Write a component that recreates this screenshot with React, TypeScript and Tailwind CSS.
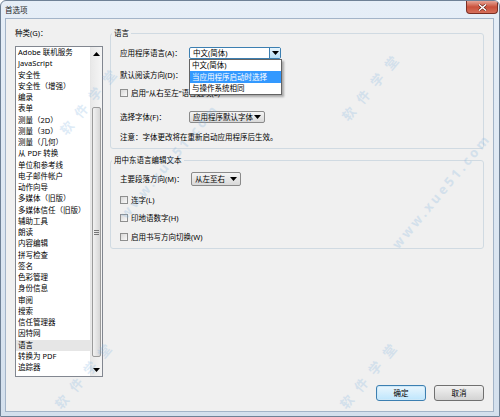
import type { ReactNode } from "react";

const categories = [
  "Adobe 联机服务",
  "JavaScript",
  "安全性",
  "安全性（增强）",
  "编录",
  "表单",
  "测量（2D）",
  "测量（3D）",
  "测量（几何）",
  "从 PDF 转换",
  "单位和参考线",
  "电子邮件帐户",
  "动作向导",
  "多媒体（旧版）",
  "多媒体信任（旧版）",
  "辅助工具",
  "朗读",
  "内容编辑",
  "拼写检查",
  "签名",
  "色彩管理",
  "身份信息",
  "审阅",
  "搜索",
  "信任管理器",
  "因特网",
  "语言",
  "转换为 PDF",
  "追踪器",
];

function Arrow({ up = false }: { up?: boolean }) {
  return (
    <svg width="7" height="4" viewBox="0 0 7 4" className={up ? "rotate-180" : ""}>
      <path d="M0 0h7L3.5 4z" fill="#000" />
    </svg>
  );
}

function Combo({ value, width }: { value: string; width: string }) {
  return (
    <div
      className={`${width} h-full flex items-center justify-between rounded-[2px] border border-[#8a8a8a] bg-gradient-to-b from-[#f4f4f4] to-[#d9d9d9] pl-[3px] pr-[3px]`}
    >
      <span className="truncate">{value}</span>
      <Arrow />
    </div>
  );
}

function Check({ children }: { children: ReactNode }) {
  return (
    <div className="h-[12px] flex items-center gap-[3px]">
      <span className="w-[8px] h-[8px] border border-[#8e8f8f] bg-gradient-to-br from-[#d8d8d8] to-[#fafafa]" />
      <span>{children}</span>
    </div>
  );
}

function GroupBox({ title, className, children }: { title: string; className?: string; children: ReactNode }) {
  return (
    <fieldset className={`border border-[#d0dae2] rounded-[3px] pb-[5px] ${className ?? ""}`}>
      <legend className="ml-px px-[2px] leading-[12px]">{title}</legend>
      <div className="pl-[9px]">{children}</div>
    </fieldset>
  );
}

function Mark({ text, className }: { text: string; className: string }) {
  return (
    <span
      className={`absolute -translate-x-1/2 -translate-y-1/2 rotate-[-50deg] whitespace-nowrap text-[#7fb2e0] opacity-25 font-bold pointer-events-none ${className}`}
    >
      {text}
    </span>
  );
}

export default function App() {
  return (
    <div className="relative w-[500px] h-[417px] overflow-hidden rounded-t-[6px] border border-[#6f8196] bg-gradient-to-b from-[#e6eef7] to-[#d4e0ed] text-[7.5px] leading-[12px] text-black font-['Noto_Sans','Noto_Sans_CJK_SC',sans-serif]">
      {/* title bar */}
      <div className="h-[17px] flex items-center pl-[4px] text-[#1e1e1e]">首选项</div>

      {/* close button */}
      <div className="absolute top-0 right-[1px] w-[32px] h-[13px] flex items-center justify-center rounded-b-[4px] border border-t-0 border-[#7b2e23] bg-gradient-to-b from-[#e6a597] via-[#c9503a] to-[#d6705b]">
        <svg width="9" height="7" viewBox="0 0 9 7">
          <path d="M1 0.5l7 6M8 0.5l-7 6" stroke="#5a1a10" strokeWidth="2.6" />
          <path d="M1 0.5l7 6M8 0.5l-7 6" stroke="#fff" strokeWidth="1.5" />
        </svg>
      </div>

      {/* client area */}
      <div className="ml-[4px] mr-[5px] h-[394px] border border-[#a3b4c8] bg-[#f0f0f0] flex flex-col">
        <div className="flex pt-[8px] pl-[9px] gap-[7px]">
          {/* category list */}
          <div className="w-[88px] flex flex-col">
            <div className="h-[12px]">种类(G)：</div>
            <div className="mt-[7px] h-[331px] border border-[#828790] bg-white flex">
              <div className="flex-1 flex flex-col">
                {categories.map((c) => (
                  <div
                    key={c}
                    className={`h-[11.25px] leading-[11.25px] pl-[2px] whitespace-nowrap ${c === "语言" ? "bg-[#e6e6e6]" : ""}`}
                  >
                    {c}
                  </div>
                ))}
              </div>
              {/* scrollbar */}
              <div className="w-[12px] flex flex-col border-l border-[#e6e6e6] bg-gradient-to-r from-[#e9e9e9] to-[#f5f5f5]">
                <div className="h-[13px] flex items-center justify-center">
                  <Arrow up />
                </div>
                <div className="mt-[47px] h-[250px] mx-[1px] rounded-[2px] border border-[#9b9b9b] bg-gradient-to-r from-[#f2f2f2] to-[#d6d6d6] flex items-center justify-center">
                  <div className="flex flex-col gap-[1px]">
                    <span className="w-[5px] h-px bg-[#777]" />
                    <span className="w-[5px] h-px bg-[#777]" />
                    <span className="w-[5px] h-px bg-[#777]" />
                  </div>
                </div>
                <div className="flex-1" />
                <div className="h-[13px] flex items-center justify-center">
                  <Arrow />
                </div>
              </div>
            </div>
          </div>

          {/* settings panel */}
          <div className="w-[374px] flex flex-col">
            <GroupBox title="语言">
              <div className="relative mt-[8px] h-[12px] flex items-center">
                <span className="w-[69px]">应用程序语言(A)：</span>
                <div className="w-[92px] h-full flex items-center justify-between rounded-[2px] border border-[#3c7fb1] bg-white pl-[3px]">
                  <span>中文(简体)</span>
                  <div className="w-[11px] h-full flex items-center justify-center border-l border-[#3c7fb1] bg-gradient-to-b from-[#e8f5fd] to-[#b9dff5]">
                    <Arrow />
                  </div>
                </div>
                {/* open drop-down */}
                <div className="absolute z-10 left-[69px] top-full w-[93px] h-[36px] border border-[#646464] bg-white shadow-[2px_2px_2px_rgba(0,0,0,0.3)]">
                  <div className="h-[11px] pl-[2px] leading-[11px]">中文(简体)</div>
                  <div className="h-[12px] pl-[2px] bg-[#3399ff] text-white">当应用程序启动时选择</div>
                  <div className="h-[11px] pl-[2px] leading-[11px]">与操作系统相同</div>
                </div>
              </div>
              <div className="mt-[10px] h-[12px] flex items-center">
                <span className="w-[69px]">默认阅读方向(D)：</span>
                <Combo value="从左至右" width="w-[80px]" />
              </div>
              <div className="mt-[6px]">
                <Check>启用“从右至左”语言选项(E)</Check>
              </div>
              <div className="mt-[12px] h-[12px] flex items-center">
                <span className="w-[69px]">选择字体(F)：</span>
                <Combo value="应用程序默认字体" width="w-[76px]" />
              </div>
              <div className="mt-[8px] h-[12px] flex items-center">注意：字体更改将在重新启动应用程序后生效。</div>
            </GroupBox>

            <GroupBox title="用中东语言编辑文本" className="mt-[5px]">
              <div className="mt-[6px] h-[14px] flex items-center">
                <span className="w-[71px]">主要段落方向(M)：</span>
                <Combo value="从左至右" width="w-[50px]" />
              </div>
              <div className="mt-[8px]">
                <Check>连字(L)</Check>
              </div>
              <div className="mt-[6px]">
                <Check>印地语数字(H)</Check>
              </div>
              <div className="mt-[7px]">
                <Check>启用书写方向切换(W)</Check>
              </div>
            </GroupBox>
          </div>
        </div>

        {/* dialog buttons */}
        <div className="mt-[8px] flex justify-end gap-[8px] pr-[9px]">
          <button className="w-[50px] h-[16px] rounded-[3px] border border-[#3c7fb1] bg-gradient-to-b from-[#eaf6fd] to-[#bee6fd] shadow-[inset_0_0_0_1px_#cde8f8]">
            确定
          </button>
          <button className="w-[50px] h-[16px] rounded-[3px] border border-[#707070] bg-gradient-to-b from-[#f2f2f2] to-[#d3d3d3]">
            取消
          </button>
        </div>
      </div>

      {/* site watermark */}
      <Mark text="软件学堂" className="left-[90px] top-[98px] text-[13px] tracking-[9px]" />
      <Mark text="软件学堂" className="left-[372px] top-[84px] text-[13px] tracking-[9px]" />
      <Mark text="软件学堂" className="left-[85px] top-[372px] text-[13px] tracking-[9px]" />
      <Mark text="软件学堂" className="left-[370px] top-[372px] text-[13px] tracking-[9px]" />
      <Mark text="www.xue51.com" className="left-[168px] top-[160px] text-[13px] tracking-[3px]" />
      <Mark text="www.xue51.com" className="left-[440px] top-[190px] text-[13px] tracking-[3px]" />
    </div>
  );
}
